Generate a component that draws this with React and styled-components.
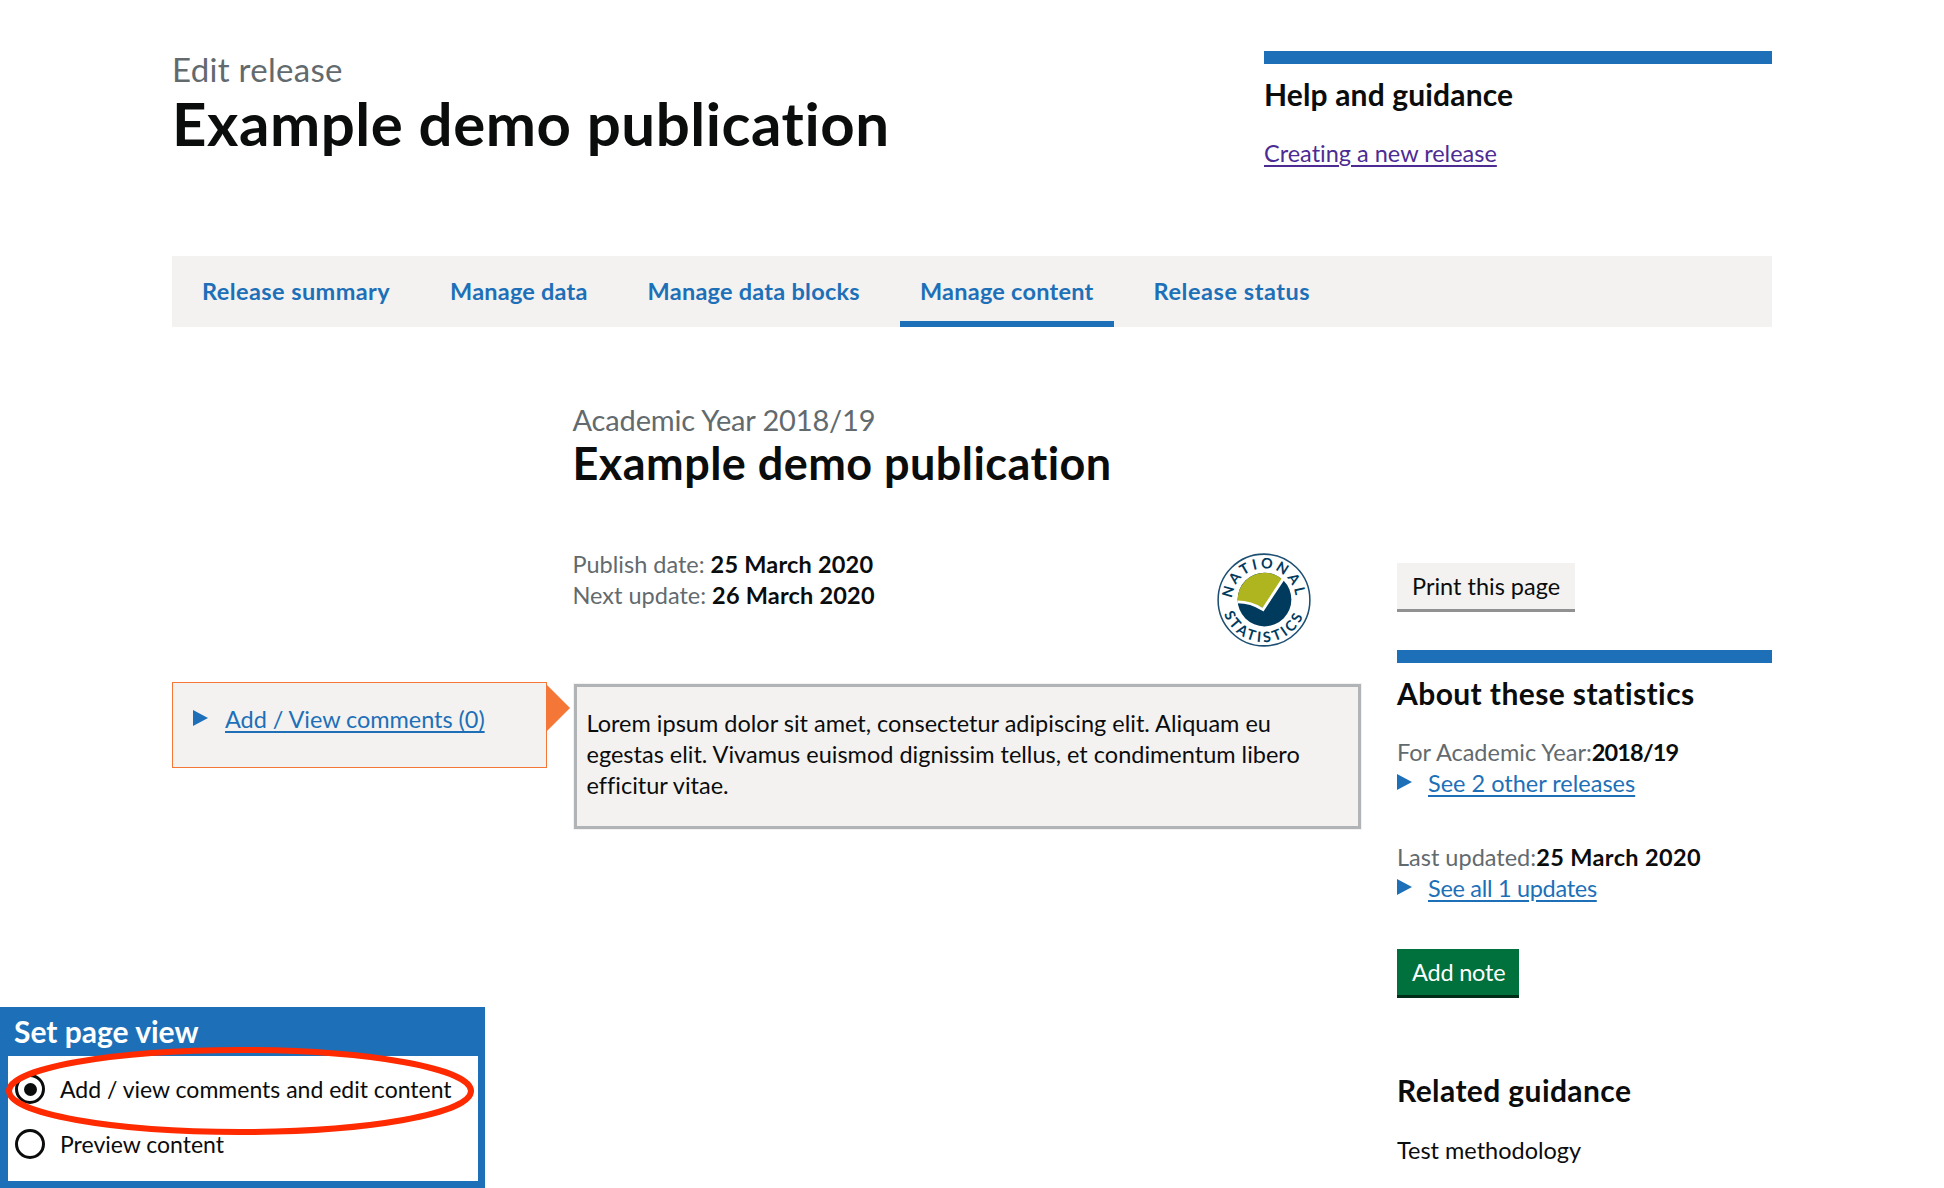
import React from "react";
import styled, { createGlobalStyle } from "styled-components";

const GlobalStyle = createGlobalStyle`
  html, body {
    margin: 0;
    padding: 0;
    background: #ffffff;
    overflow: hidden;
  }
  body {
    font-family: "Lato", "Liberation Sans", sans-serif;
    font-size: 23.5px;
    line-height: 31px;
    color: #0b0c0c;
    font-variant-ligatures: none;
  }
`;

const Page = styled.div`
  position: relative;
  width: 1944px;
  height: 1188px;
  overflow: hidden;
`;

const Container = styled.div`
  width: 1600px;
  margin: 0 auto;
  padding-top: 51px;
`;

const Header = styled.header`
  display: flex;
  justify-content: space-between;
  height: 205px;
`;

const Caption = styled.span`
  display: block;
  color: #626a6e;
  font-size: ${(props) => props.size}px;
  line-height: ${(props) => props.lh}px;
  letter-spacing: ${(props) => props.$spacing}px;
`;

const PageTitle = styled.h1`
  margin: 0;
  font-size: 60px;
  line-height: 72px;
  font-weight: 700;
  letter-spacing: 0.55px;
`;

const HelpBox = styled.aside`
  width: 508px;
  border-top: 13px solid #1d70b8;
`;

const HelpTitle = styled.h2`
  margin: 14px 0 27px;
  font-size: 30px;
  line-height: 33px;
  font-weight: 700;
  letter-spacing: 0.15px;
`;

const TextLink = styled.a`
  color: ${(props) => (props.$visited ? "#4c2c92" : "#1d70b8")};
  text-decoration: underline;
  text-underline-offset: 3px;
  letter-spacing: ${(props) => props.$spacing || 0}px;
`;

const Nav = styled.nav`
  display: flex;
  gap: 20px;
  height: 71px;
  padding: 0 10px;
  background: #f3f2f1;
`;

const NavItem = styled.a`
  display: flex;
  align-items: center;
  box-sizing: border-box;
  padding: 6px 20px 0;
  color: #1d70b8;
  font-weight: 700;
  letter-spacing: ${(props) => props.$spacing}px;
  border-bottom: 6px solid ${(props) => (props.$active ? "#1d70b8" : "transparent")};
`;

const Main = styled.main`
  display: grid;
  grid-template-columns: 400.5px 788.5px 1fr;
  grid-template-rows: auto auto 1fr;
  padding-top: 76px;
`;

const Heading = styled.div`
  grid-column: 2;
  grid-row: 1;
  height: 146px;
`;

const ArticleTitle = styled.h2`
  margin: 2px 0 0;
  font-size: 45px;
  line-height: 50px;
  font-weight: 700;
  letter-spacing: 0.45px;
`;

const Meta = styled.div`
  grid-column: 2;
  grid-row: 2;
  display: flex;
  justify-content: space-between;
  height: 133px;
`;

const MetaLines = styled.div`
  color: #626a6e;
  b {
    color: #0b0c0c;
    letter-spacing: 0.2px;
  }
`;

const Logo = styled.svg`
  width: 96px;
  height: 96px;
  margin: 3px 49px 0 0;
`;

const CommentsCol = styled.div`
  grid-column: 1;
  grid-row: 3;
  display: flex;
  align-items: flex-start;
`;

const CommentBox = styled.div`
  box-sizing: border-box;
  width: 375px;
  height: 86px;
  padding: 21px 0 0 20px;
  background: #f3f2f1;
  border: 1.5px solid #f47738;
  display: flex;
  align-items: flex-start;
`;

const Arrow = styled.div`
  width: 0;
  height: 0;
  margin-top: 3px;
  border-left: 23px solid #f47738;
  border-top: 23px solid transparent;
  border-bottom: 23px solid transparent;
`;

const Triangle = styled.span`
  flex: none;
  width: 0;
  height: 0;
  margin: 6px ${(props) => props.$gap || 16}px 0 0;
  border-left: 15px solid #1d70b8;
  border-top: 8px solid transparent;
  border-bottom: 8px solid transparent;
`;

const ContentBlock = styled.div`
  grid-column: 2;
  grid-row: 3;
  align-self: start;
  box-sizing: border-box;
  height: 145px;
  margin: 2px 0 0 1px;
  padding: 21px 9px 0 10px;
  background: #f3f2f1;
  border: 3px solid #b1b4b6;
  outline: 1px solid #f3f2f1;
`;

const Sidebar = styled.aside`
  grid-column: 3;
  grid-row: 2 / span 2;
  padding: 14px 0 0 36px;
`;

const Button = styled.a`
  display: inline-block;
  box-sizing: border-box;
  height: 49px;
  padding: 8px ${(props) => (props.$green ? 14 : 15)}px 0 15px;
  background: ${(props) => (props.$green ? "#00703c" : "#f3f2f1")};
  color: ${(props) => (props.$green ? "#ffffff" : "#0b0c0c")};
  border-bottom: 3px solid ${(props) => (props.$green ? "#002d18" : "#929191")};
  letter-spacing: ${(props) => (props.$green ? -0.2 : 0)}px;
`;

const StatsBox = styled.section`
  margin-top: 38px;
  border-top: 13px solid #1d70b8;
`;

const SideTitle = styled.h3`
  margin: ${(props) => props.$top}px 0 0;
  font-size: 30px;
  line-height: 36px;
  font-weight: 700;
  letter-spacing: 0.4px;
`;

const StatLabel = styled.div`
  margin-top: ${(props) => props.$top}px;
  color: #626a6e;
  b {
    color: #0b0c0c;
    letter-spacing: ${(props) => props.$boldSpacing}px;
  }
`;

const PlainLine = styled.div`
  margin-top: ${(props) => props.$top}px;
`;

const StatLink = styled.div`
  display: flex;
  align-items: flex-start;
`;

const ButtonRow = styled.div`
  margin-top: 45px;
`;

const ViewPanel = styled.div`
  position: absolute;
  left: 0;
  bottom: 0;
  box-sizing: border-box;
  width: 485px;
  height: 181px;
  padding: 8px 7px 7px 8px;
  background: #1d70b8;
  display: flex;
  flex-direction: column;
`;

const PanelTitle = styled.div`
  height: 41px;
  padding-left: 6px;
  color: #ffffff;
  font-size: 30px;
  line-height: 33px;
  font-weight: 700;
`;

const PanelBody = styled.div`
  flex: 1;
  padding: 18px 0 0 7px;
  background: #ffffff;
  display: flex;
  flex-direction: column;
  gap: 25px;
`;

const RadioRow = styled.label`
  display: flex;
  align-items: center;
  gap: 15px;
  height: 30px;
  font-size: 23px;
`;

const RadioMark = styled.span`
  box-sizing: border-box;
  flex: none;
  width: 30px;
  height: 30px;
  border: 3px solid #0b0c0c;
  border-radius: 50%;
  display: flex;
  align-items: center;
  justify-content: center;
  &::after {
    content: "";
    width: 13px;
    height: 13px;
    border-radius: 50%;
    background: ${(props) => (props.$checked ? "#0b0c0c" : "transparent")};
  }
`;

const Highlight = styled.svg`
  position: absolute;
  left: 0;
  bottom: 0;
  width: 485px;
  height: 150px;
  pointer-events: none;
`;

const LogoText = styled.text`
  font-family: "Lato", sans-serif;
  font-size: 15px;
  font-weight: 700;
  fill: #003a5d;
  letter-spacing: ${(props) => props.$spacing}px;
`;

function NationalStatisticsLogo() {
  return (
    <Logo viewBox="0 0 100 100">
      <defs>
        <path id="ns-top" d="M17 50a33 33 0 1 1 66 0" />
        <path id="ns-bottom" d="M6 50a44 44 0 0 0 88 0" />
      </defs>
      <circle cx="50" cy="50" r="47.8" fill="#fff" stroke="#1d4f72" strokeWidth="1.6" />
      <circle cx="50.5" cy="49.5" r="28" fill="#003a5d" />
      <path d="M22.7 52A28 28 0 0 1 69 28.5L49 58C40 54 32 52 22.7 52z" fill="#aeb51e" />
      <path d="M22.5 52C32 52 41 55 49 60L70 28" fill="none" stroke="#fff" strokeWidth="3" />
      <LogoText $spacing={3}>
        <textPath href="#ns-top" startOffset="50%" textAnchor="middle">NATIONAL</textPath>
      </LogoText>
      <LogoText $spacing={3}>
        <textPath href="#ns-bottom" startOffset="50%" textAnchor="middle">STATISTICS</textPath>
      </LogoText>
    </Logo>
  );
}

export default function App() {
  return (
    <Page>
      <GlobalStyle />
      <Container>
        <Header>
          <div>
            <Caption size={33} lh={36} $spacing={0.3}>Edit release</Caption>
            <PageTitle>Example demo publication</PageTitle>
          </div>
          <HelpBox>
            <HelpTitle>Help and guidance</HelpTitle>
            <TextLink href="#" $visited>Creating a new release</TextLink>
          </HelpBox>
        </Header>
        <Nav>
          <NavItem $spacing={0.42}>Release summary</NavItem>
          <NavItem $spacing={0.2}>Manage data</NavItem>
          <NavItem $spacing={0.25}>Manage data blocks</NavItem>
          <NavItem $active $spacing={0.25}>Manage content</NavItem>
          <NavItem $spacing={0.55}>Release status</NavItem>
        </Nav>
        <Main>
          <Heading>
            <Caption size={29} lh={33} $spacing={-0.15}>Academic Year 2018/19</Caption>
            <ArticleTitle>Example demo publication</ArticleTitle>
          </Heading>
          <Meta>
            <MetaLines>
              Publish date: <b>25 March 2020</b>
              <br />
              Next update: <b>26 March 2020</b>
            </MetaLines>
            <NationalStatisticsLogo />
          </Meta>
          <CommentsCol>
            <CommentBox>
              <Triangle $gap={17} />
              <TextLink href="#" $spacing={-0.05}>Add / View comments (0)</TextLink>
            </CommentBox>
            <Arrow />
          </CommentsCol>
          <ContentBlock>
            Lorem ipsum dolor sit amet, consectetur adipiscing elit. Aliquam eu egestas elit. Vivamus euismod dignissim tellus, et condimentum libero efficitur vitae.
          </ContentBlock>
          <Sidebar>
            <Button>Print this page</Button>
            <StatsBox>
              <SideTitle $top={12}>About these statistics</SideTitle>
              <StatLabel $top={26} $boldSpacing={-0.9}>For Academic Year:<b>2018/19</b></StatLabel>
              <StatLink>
                <Triangle />
                <TextLink href="#">See 2 other releases</TextLink>
              </StatLink>
              <StatLabel $top={43} $boldSpacing={0.38}>Last updated:<b>25 March 2020</b></StatLabel>
              <StatLink>
                <Triangle />
                <TextLink href="#" $spacing={-0.3}>See all 1 updates</TextLink>
              </StatLink>
            </StatsBox>
            <ButtonRow>
              <Button $green>Add note</Button>
            </ButtonRow>
            <SideTitle $top={74}>Related guidance</SideTitle>
            <PlainLine $top={27}>Test methodology</PlainLine>
          </Sidebar>
        </Main>
      </Container>
      <ViewPanel>
        <PanelTitle>Set page view</PanelTitle>
        <PanelBody>
          <RadioRow>
            <RadioMark $checked />
            Add / view comments and edit content
          </RadioRow>
          <RadioRow>
            <RadioMark />
            Preview content
          </RadioRow>
        </PanelBody>
      </ViewPanel>
      <Highlight viewBox="0 0 485 150">
        <ellipse cx="240" cy="53" rx="231" ry="41" fill="none" stroke="#ff2a00" strokeWidth="6" />
      </Highlight>
    </Page>
  );
}
